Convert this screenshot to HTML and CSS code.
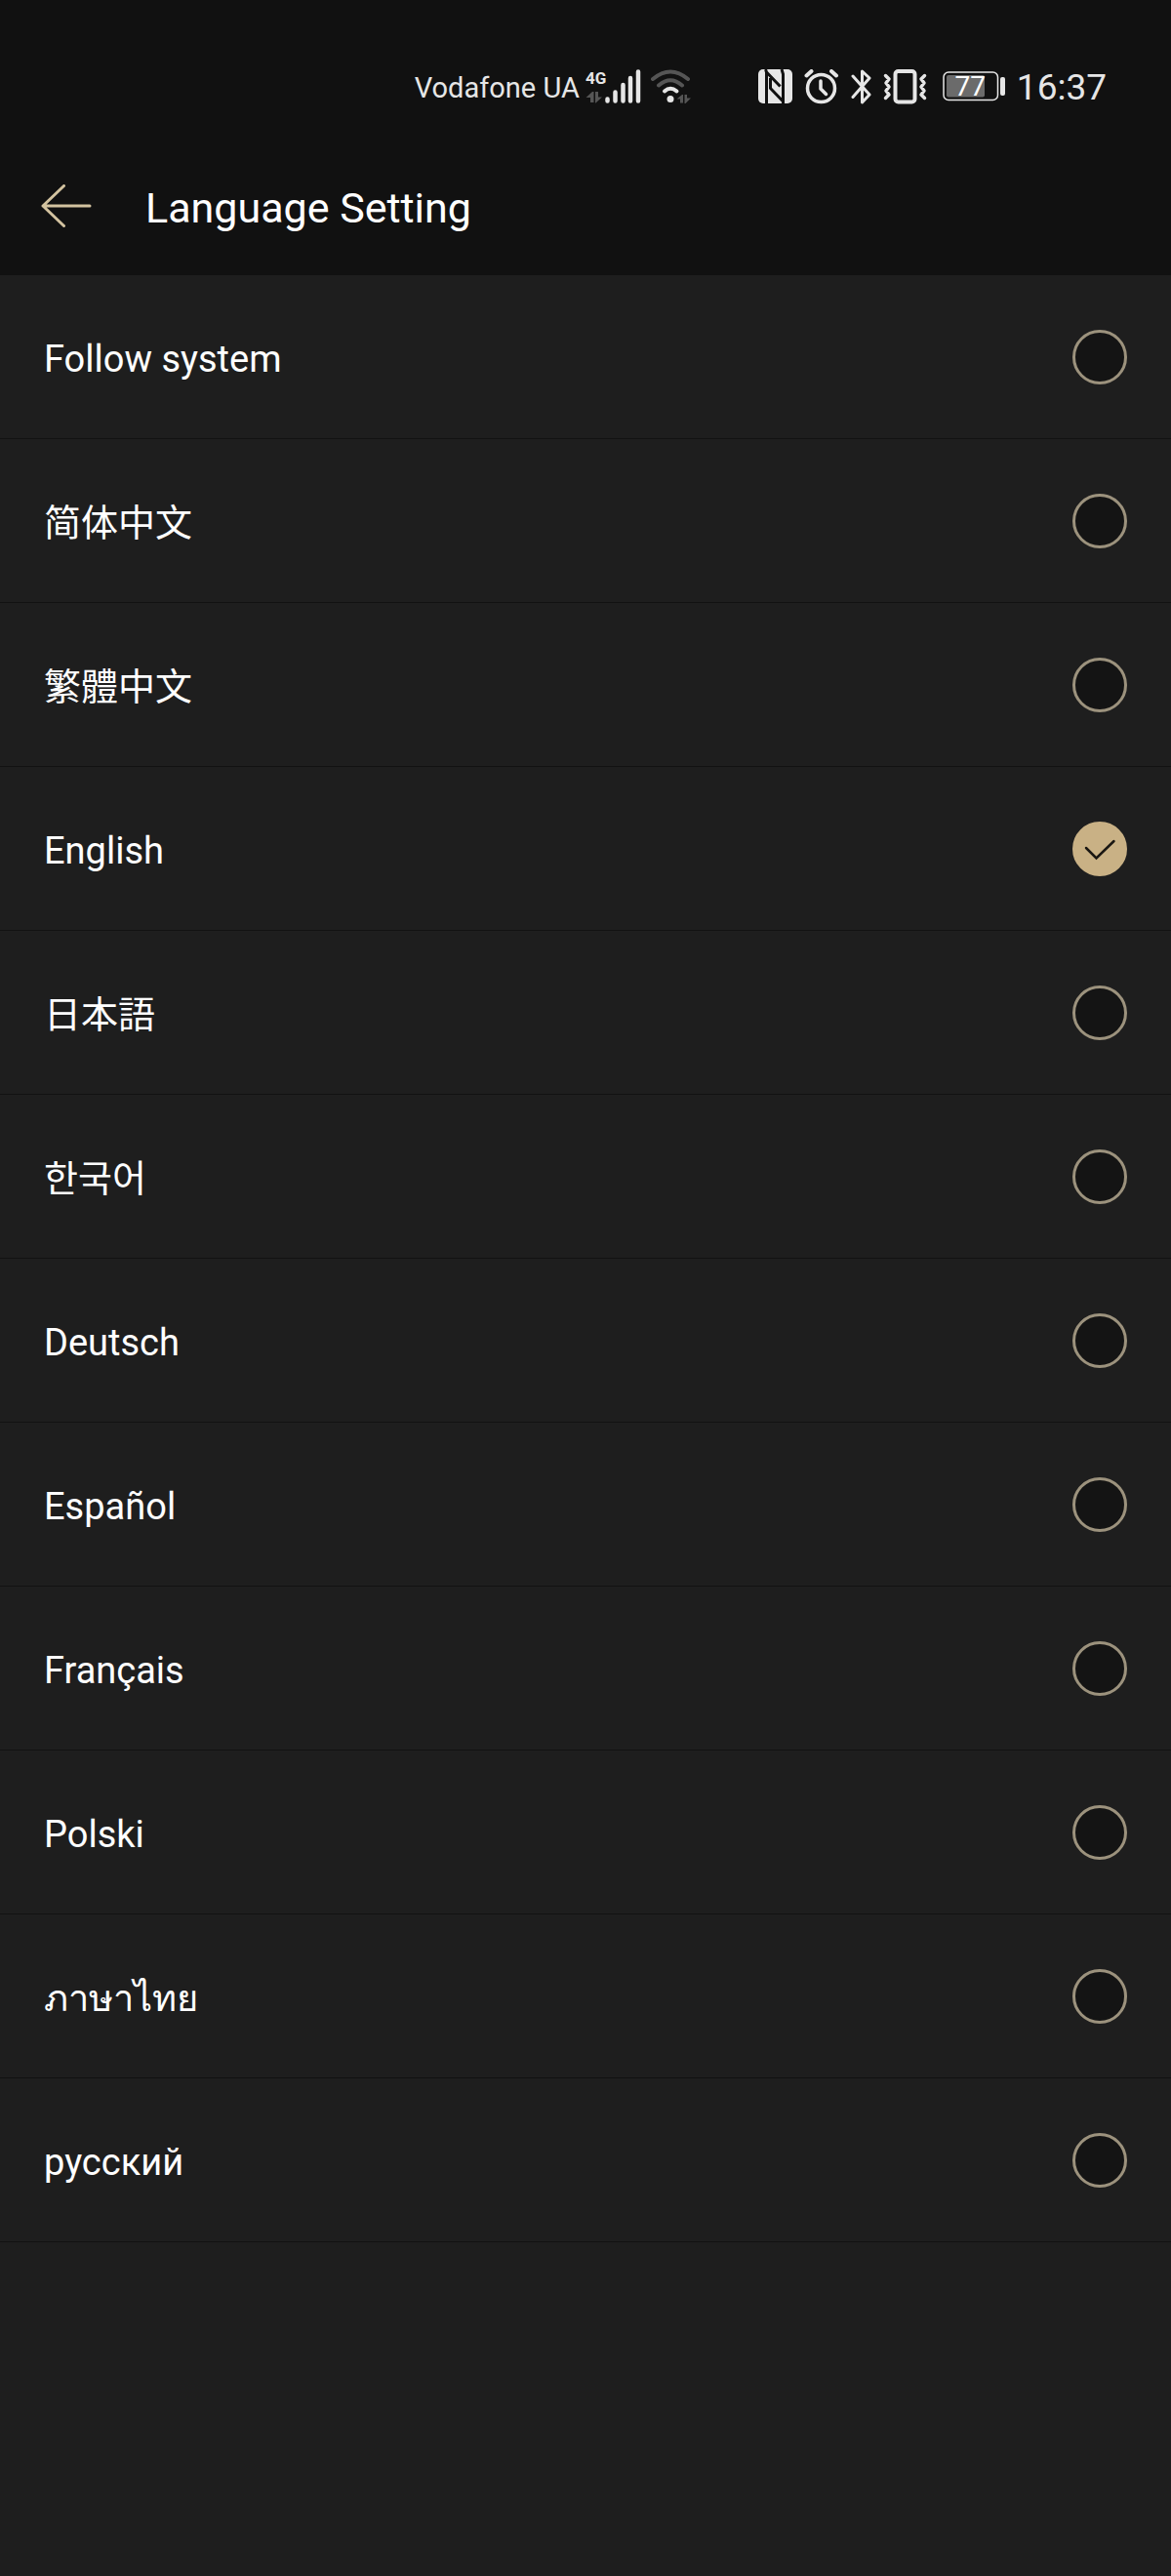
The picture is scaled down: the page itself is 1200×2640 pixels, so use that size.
FILE: index.html
```html
<!DOCTYPE html>
<html lang="en">
<head>
  <meta charset="utf-8">
  <meta name="viewport" content="width=device-width, initial-scale=1">
  <title>Language Setting</title>
  <link rel="stylesheet" href="styles.css">
</head>
<body>
<div class="status-bar">
  <div class="status-network">
    <span class="carrier">Vodafone UA</span>
    <svg class="icon" width="60" height="36" viewBox="0 0 60 36" aria-hidden="true">
      <text class="network-type" x="0" y="15">4G</text>
      <path class="dim" d="M0.500 29L7 23H8.500V34H5V29zM10 23H13V28.500H17L10.500 34.500H10z"/>
      <path class="stroke" stroke-width="4.500" stroke-linecap="round" d="M22.500 30.500V32.500M30.500 23.500V32.500M38.500 16V32.500M46 9V32.500M54 2.500V32.500"/>
    </svg>
    <svg class="icon" width="42" height="36" viewBox="0 0 42 36" aria-hidden="true">
      <path class="stroke-dim" stroke-width="4" stroke-linecap="round" d="M3 10Q21 -5 39 10M9 16.500Q21 6 33 16.500"/>
      <path class="stroke" stroke-width="4" stroke-linecap="round" d="M15 22.500Q21 17 27.500 22.500"/>
      <circle class="fill" cx="21" cy="30.500" r="3.500"/>
      <path class="dim" d="M27.500 30.500L33 26H34V34.500H31V30.500zM35.500 26H38V29.500H42L36.500 35H35.500z"/>
    </svg>
  </div>
  <div class="status-system">
    <svg class="icon" width="35" height="36" viewBox="0 0 35 36" aria-hidden="true">
      <rect class="fill" width="35" height="35" rx="5"/>
      <path class="cut" d="M8.500 36V3L22.500 17.500M8.500 3L7.500 0M25.500 36V5L24 0M25.500 33L12.500 19.500V9"/>
    </svg>
    <svg class="icon" width="36" height="36" viewBox="0 0 36 36" aria-hidden="true">
      <circle class="stroke" cx="17.500" cy="19.500" r="14" stroke-width="3.500"/>
      <path class="stroke" stroke-width="3.500" stroke-linecap="round" stroke-linejoin="round" d="M17 12V20L22.500 25.500"/>
      <path class="stroke" stroke-width="4" stroke-linecap="round" d="M2.500 6.500L7.500 2M28 2L33 6.500"/>
    </svg>
    <svg class="icon" width="21" height="36" viewBox="0 0 21 36" aria-hidden="true">
      <path class="stroke" stroke-width="3" stroke-linejoin="round" stroke-linecap="round" d="M2 7L19 26L11.500 34V2L19 9L2 28.500"/>
    </svg>
    <svg class="icon" width="49" height="36" viewBox="0 0 49 36" aria-hidden="true">
      <rect class="stroke" x="12.500" y="2" width="20" height="31.500" rx="3" stroke-width="4"/>
      <path class="stroke" stroke-width="3.500" stroke-linecap="round" stroke-linejoin="round" d="M2.500 6.500L6 10L3 14L6 18L3 22L6 26L2.500 29.500M42.500 6.500L39 10L42 14L39 18L42 22L39 26L42.500 29.500"/>
    </svg>
    <svg class="icon" width="64" height="36" viewBox="0 0 64 36" aria-hidden="true">
      <rect class="stroke" x="1" y="3" width="55.500" height="28.500" rx="5" stroke-width="1.500"/>
      <rect class="charge" x="4" y="6" width="39" height="22.500" rx="2"/>
      <rect class="fill" x="59" y="8" width="5" height="19" rx="2"/>
      <text class="battery-level" x="12.500" y="27">77</text>
    </svg>
    <span class="clock">16:37</span>
  </div>
</div>

<header class="title-bar">
  <button class="back" type="button" aria-label="Back">
    <svg class="icon" width="52" height="44" viewBox="0 0 52 44" aria-hidden="true">
      <path class="arrow" d="M23.500 1.500L2 22L23.500 42.500M2 22H50"/>
    </svg>
  </button>
  <h1 class="title">Language Setting</h1>
</header>

<main class="languages">
  <label class="language"><span class="name">Follow system</span><input class="radio" type="radio" name="language"></label>
  <label class="language" lang="zh-Hans"><span class="name">简体中文</span><input class="radio" type="radio" name="language"></label>
  <label class="language" lang="zh-Hant"><span class="name">繁體中文</span><input class="radio" type="radio" name="language"></label>
  <label class="language"><span class="name">English</span><input class="radio" type="radio" name="language" checked></label>
  <label class="language" lang="ja"><span class="name">日本語</span><input class="radio" type="radio" name="language"></label>
  <label class="language" lang="ko"><span class="name">한국어</span><input class="radio" type="radio" name="language"></label>
  <label class="language" lang="de"><span class="name">Deutsch</span><input class="radio" type="radio" name="language"></label>
  <label class="language" lang="es"><span class="name">Español</span><input class="radio" type="radio" name="language"></label>
  <label class="language" lang="fr"><span class="name">Français</span><input class="radio" type="radio" name="language"></label>
  <label class="language" lang="pl"><span class="name">Polski</span><input class="radio" type="radio" name="language"></label>
  <label class="language" lang="th"><span class="name">ภาษาไทย</span><input class="radio" type="radio" name="language"></label>
  <label class="language" lang="ru"><span class="name">русский</span><input class="radio" type="radio" name="language"></label>
</main>
</body>
</html>
```
FILE: styles.css
```css
body {
  margin: 0;
  background-color: #1e1e1e;
  color: #fff;
  font-family: Roboto, "Noto Sans CJK SC", sans-serif;
}

/* Status bar */
.status-bar {
  display: flex;
  justify-content: flex-end;
  gap: 69px;
  padding: 67px 66px 29px;
  background-color: #111;
  color: #e6e6e6;
  line-height: 44px;
}

.status-network,
.status-system {
  display: flex;
  align-items: center;
}

.status-network {
  gap: 6px;
}

.status-system {
  gap: 12px;
}

.carrier,
.clock {
  padding-top: 2px;
  line-height: 42px;
}

.carrier {
  font-size: 29px;
}

.clock {
  font-size: 37px;
}

.icon {
  display: block;
  flex: none;
}

.fill {
  fill: #e6e6e6;
}

.dim {
  fill: #555;
}

.charge {
  fill: #6b6b6b;
}

.stroke {
  fill: none;
  stroke: #e6e6e6;
}

.stroke-dim {
  fill: none;
  stroke: #555;
}

.cut {
  fill: none;
  stroke: #111;
  stroke-width: 3;
}

.network-type {
  fill: #e6e6e6;
  font-size: 17px;
  font-weight: 700;
}

.battery-level {
  fill: #fff;
  font-size: 28px;
}

/* Title bar */
.title-bar {
  display: flex;
  align-items: center;
  gap: 55px;
  padding: 41px 42px;
  background-color: #111;
}

.back {
  padding: 0;
  border: 0;
  background: none;
  cursor: pointer;
}

.arrow {
  fill: none;
  stroke: #d3c3a0;
  stroke-width: 3;
  stroke-linecap: round;
  stroke-linejoin: round;
}

.title {
  margin: 0;
  padding-top: 4px;
  font-size: 43px;
  font-weight: 400;
  line-height: 56px;
}

/* Language list */
.language {
  display: flex;
  align-items: center;
  justify-content: space-between;
  padding: 56px 45px 55px;
  border-bottom: 1px solid #121212;
  font-size: 38px;
  line-height: 52px;
  cursor: pointer;
}

.name {
  padding-top: 4px;
}

.language:lang(zh-Hant) {
  font-family: Roboto, "Noto Sans CJK TC", sans-serif;
}

.language:lang(ja) {
  font-family: Roboto, "Noto Sans CJK JP", sans-serif;
}

.language:lang(ko) {
  font-family: Roboto, "Noto Sans CJK KR", sans-serif;
}

.radio {
  appearance: none;
  flex: none;
  box-sizing: border-box;
  width: 56px;
  height: 56px;
  margin: 0;
  border: 3px solid #9c927d;
  border-radius: 50%;
  background-color: #141414;
}

.radio:checked {
  border-color: #c9b185;
  background: #c9b185 url("data:image/svg+xml,%3Csvg xmlns='http://www.w3.org/2000/svg' width='50' height='50' fill='none' stroke='%231a1712' stroke-width='2.500' stroke-linecap='round'%3E%3Cpath d='M11 24L21.500 34.500L39.500 17'/%3E%3C/svg%3E") center no-repeat;
}
```
